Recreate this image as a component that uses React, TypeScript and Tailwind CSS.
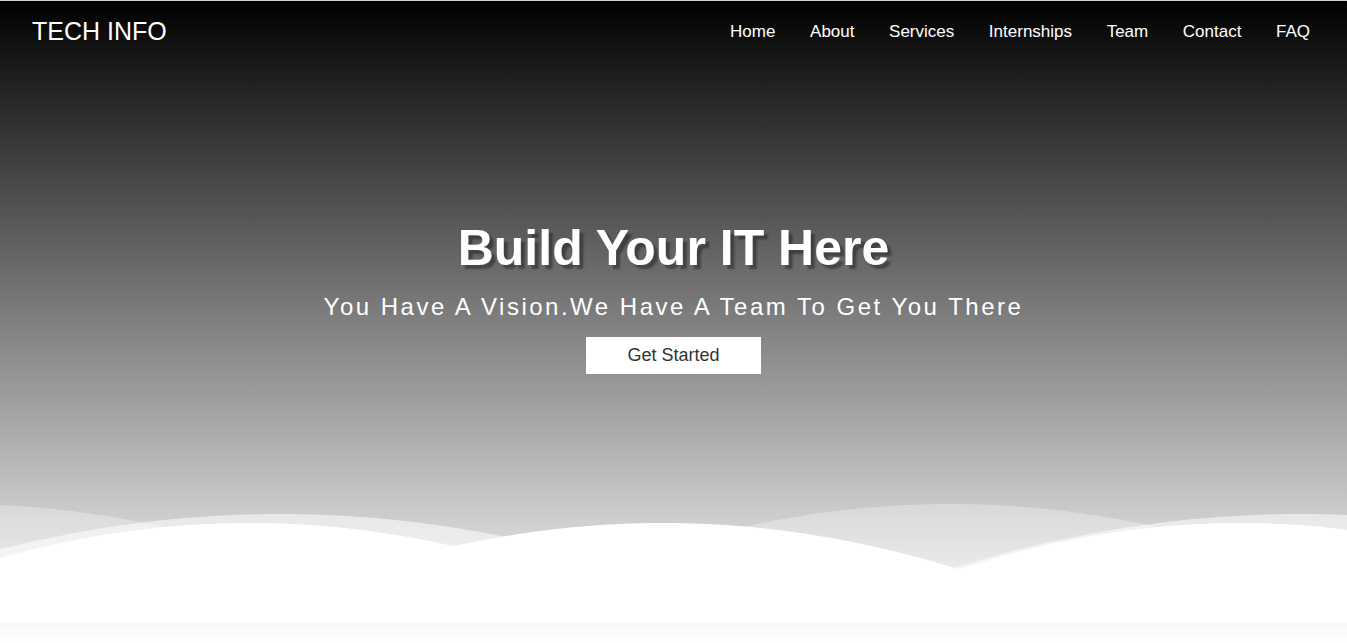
import React from 'react';

type Arc = [number, number, number]; // peak x, peak y, curvature

const navLinks = ['Home', 'About', 'Services', 'Internships', 'Team', 'Contact', 'FAQ'];

// top edge of a wave layer = lowest point of its overlapping arcs
function wavePath(arcs: Arc[]) {
  const edge = (x: number) => Math.min(...arcs.map(([px, py, k]) => py + k * (x - px) * (x - px)));
  const pts: string[] = [];
  for (let x = 0; x <= 1347; x += 3) pts.push(`${x} ${Math.min(edge(x), 623).toFixed(1)}`);
  pts.push(`1347 ${Math.min(edge(1347), 623).toFixed(1)}`);
  return `M ${pts.join(' L ')} L 1347 623 L 0 623 Z`;
}

const back: Arc[] = [[-43, 504, 0.000537], [950, 504, 0.000537], [1943, 504, 0.000537]];
const middle: Arc[] = [[280, 514, 0.00045], [1300, 514, 0.00045]];
const front: Arc[] = [[250, 523, 0.00056], [663, 523, 0.00053], [1240, 523, 0.00059]];

function Waves() {
  return (
    <svg className="block w-full h-[125px] mt-auto" viewBox="0 498 1347 125" preserveAspectRatio="none">
      <path d={wavePath(back)} fill="rgba(255,255,255,0.3)" />
      <path d={wavePath(middle)} fill="rgba(255,255,255,0.55)" />
      <path d={wavePath(front)} fill="#ffffff" />
    </svg>
  );
}

export default function App() {
  return (
    <div className="font-['Liberation_Sans',Arial,sans-serif]">
      <section className="flex flex-col h-[643px] border-t border-[#d0d0d0] bg-[linear-gradient(to_bottom,#000000,#ffffff)] pb-5">
        {/* Navbar */}
        <nav className="flex items-center justify-between h-[61px] pl-8 pr-[37px]">
          <a href="#" className="text-[25px] leading-none text-white">TECH INFO</a>
          <ul className="flex items-center gap-[34.6px]">
            {navLinks.map((link) => (
              <li key={link}>
                <a href="#" className="text-[17px] text-white">{link}</a>
              </li>
            ))}
          </ul>
        </nav>

        {/* Hero */}
        <div className="flex flex-col items-center text-center mt-[157px]">
          <h1 className="text-[50px] leading-[1.18] font-bold text-white [text-shadow:4px_4px_2px_rgba(0,0,0,0.35)]">
            Build Your IT Here
          </h1>
          <p className="mt-[15px] text-[24px] leading-[1.2] tracking-[2.5px] text-white">
            You Have A Vision.We Have A Team To Get You There
          </p>
          <a
            href="#"
            className="mt-[15px] flex items-center justify-center w-[175px] h-[37px] bg-white text-[18px] text-[#333333]"
          >
            Get Started
          </a>
        </div>

        <Waves />
      </section>
    </div>
  );
}
